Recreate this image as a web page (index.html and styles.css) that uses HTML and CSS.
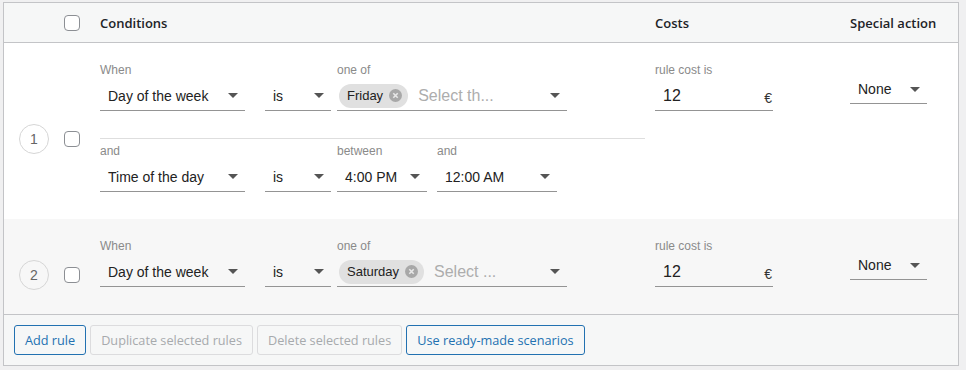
FILE: index.html
```html
<!DOCTYPE html>
<html lang="en">
<head>
  <meta charset="UTF-8">
  <title>Rules table</title>
  <link rel="stylesheet" href="styles.css">
</head>
<body>
  <div class="rules">
    <div class="row rules-head">
      <div class="cell"></div>
      <div class="cell check"><span class="checkbox"></span></div>
      <div class="cell">Conditions</div>
      <div class="cell">Costs</div>
      <div class="cell">Special action</div>
    </div>

    <div class="row rule">
      <div class="cell num"><span class="circle">1</span></div>
      <div class="cell check"><span class="checkbox"></span></div>
      <div class="cell conditions">
        <div class="condition">
          <div class="field w-what">
            <div class="label">When</div>
            <div class="select"><span>Day of the week</span><i class="caret"></i></div>
          </div>
          <div class="field w-is">
            <div class="label">&nbsp;</div>
            <div class="select"><span>is</span><i class="caret"></i></div>
          </div>
          <div class="field w-multi">
            <div class="label">one of</div>
            <div class="select multi">
              <span class="chip">Friday
                <svg width="13" height="13" viewBox="0 0 13 13"><circle cx="6.5" cy="6.5" r="6.5" fill="#a8a8a8"/><path d="M4.3 4.3l4.4 4.4M8.7 4.3l-4.4 4.4" stroke="#e8e8e8" stroke-width="1.6"/></svg>
              </span>
              <span class="placeholder">Select th...</span>
              <i class="caret"></i>
            </div>
          </div>
        </div>
        <div class="divider"></div>
        <div class="condition">
          <div class="field w-what">
            <div class="label">and</div>
            <div class="select"><span>Time of the day</span><i class="caret"></i></div>
          </div>
          <div class="field w-is">
            <div class="label">&nbsp;</div>
            <div class="select"><span>is</span><i class="caret"></i></div>
          </div>
          <div class="field w-time">
            <div class="label">between</div>
            <div class="select"><span>4:00 PM</span><i class="caret"></i></div>
          </div>
          <div class="field w-time2">
            <div class="label">and</div>
            <div class="select"><span>12:00 AM</span><i class="caret"></i></div>
          </div>
        </div>
      </div>
      <div class="cell">
        <div class="field w-cost">
          <div class="label">rule cost is</div>
          <div class="select cost"><span>12</span><span class="euro">€</span></div>
        </div>
      </div>
      <div class="cell">
        <div class="select action"><span>None</span><i class="caret"></i></div>
      </div>
    </div>

    <div class="row rule rule-alt">
      <div class="cell num"><span class="circle">2</span></div>
      <div class="cell check"><span class="checkbox"></span></div>
      <div class="cell conditions">
        <div class="condition">
          <div class="field w-what">
            <div class="label">When</div>
            <div class="select"><span>Day of the week</span><i class="caret"></i></div>
          </div>
          <div class="field w-is">
            <div class="label">&nbsp;</div>
            <div class="select"><span>is</span><i class="caret"></i></div>
          </div>
          <div class="field w-multi">
            <div class="label">one of</div>
            <div class="select multi">
              <span class="chip">Saturday
                <svg width="13" height="13" viewBox="0 0 13 13"><circle cx="6.5" cy="6.5" r="6.5" fill="#a8a8a8"/><path d="M4.3 4.3l4.4 4.4M8.7 4.3l-4.4 4.4" stroke="#e8e8e8" stroke-width="1.6"/></svg>
              </span>
              <span class="placeholder">Select ...</span>
              <i class="caret"></i>
            </div>
          </div>
        </div>
      </div>
      <div class="cell">
        <div class="field w-cost">
          <div class="label">rule cost is</div>
          <div class="select cost"><span>12</span><span class="euro">€</span></div>
        </div>
      </div>
      <div class="cell">
        <div class="select action"><span>None</span><i class="caret"></i></div>
      </div>
    </div>

    <div class="rules-foot">
      <button class="btn">Add rule</button>
      <button class="btn disabled">Duplicate selected rules</button>
      <button class="btn disabled">Delete selected rules</button>
      <button class="btn">Use ready-made scenarios</button>
    </div>
  </div>
</body>
</html>
```

FILE: styles.css
```css
body {
  margin: 0;
  background: #f0f0f1;
  font-family: "Liberation Sans", Arial, sans-serif;
  color: #1d2327;
}
.rules {
  width: 956px;
  box-sizing: border-box;
  margin: 2px 0 0 3px;
  border: 1px solid #c3c4c7;
  background: #fff;
}
.row {
  display: grid;
  grid-template-columns: 46px 50px 555px 195px 1fr;
}
.rules-head {
  height: 39px;
  align-items: center;
  background: #f6f7f7;
  border-bottom: 1px solid #c3c4c7;
  font-family: "Open Sans", "Noto Sans", sans-serif;
  font-size: 13px;
  font-weight: 600;
}
.rules-head .cell { display: flex; align-items: center; }
.rules-head .check { padding-left: 14px; }
.checkbox {
  display: block;
  width: 16px;
  height: 16px;
  box-sizing: border-box;
  border: 1px solid #8c8f94;
  border-radius: 4px;
  background: #fff;
}
.rule { background: #fff; }
.rule-alt { background: #f7f7f7; border-bottom: 1px solid #c3c4c7; }
.rule > .cell { padding: 20px 0 27px; }
.rule > .num, .rule > .check {
  display: flex;
  align-items: center;
  padding: 16px 0 0 14px;
}
.rule > .num { padding-left: 15px; }
.circle {
  width: 30px;
  height: 30px;
  box-sizing: border-box;
  border: 1px solid #d6d6d6;
  border-radius: 50%;
  display: flex;
  align-items: center;
  justify-content: center;
  font-size: 14px;
  color: #666;
}
.rule > .conditions { padding-right: 10px; }
.condition { display: flex; }
.divider {
  height: 1px;
  background: #dedede;
  margin: 27px 0 5px;
}
.label {
  height: 14px;
  line-height: 14px;
  font-size: 12px;
  color: #8a8a8a;
  margin-bottom: 4px;
}
.select {
  height: 29px;
  border-bottom: 1px solid #949494;
  display: flex;
  align-items: center;
  justify-content: space-between;
  padding: 0 7px 0 8px;
  font-size: 14px;
  color: #222;
}
.caret {
  width: 0;
  height: 0;
  border-left: 5px solid transparent;
  border-right: 5px solid transparent;
  border-top: 5px solid #555;
}
.w-what { width: 145px; margin-right: 20px; }
.w-is { width: 66px; margin-right: 6px; }
.w-multi { width: 230px; }
.w-time { width: 90px; margin-right: 10px; }
.w-time2 { width: 120px; }
.w-cost { width: 118px; }
.multi { padding-left: 2px; justify-content: flex-start; }
.multi .caret { margin-left: auto; }
.chip {
  display: flex;
  align-items: center;
  height: 24px;
  padding: 0 6px 0 8px;
  border-radius: 12px;
  background: #e0e0e0;
  font-size: 13px;
  color: #222;
}
.chip svg { margin-left: 6px; }
.placeholder {
  margin-left: 10px;
  font-size: 16px;
  color: #adadad;
}
.cost { font-size: 16px; padding-right: 1px; }
.euro { font-size: 14px; padding-top: 5px; color: #333; }
.action { width: 77px; box-sizing: border-box; margin-top: 12px; }
.rules-foot {
  display: flex;
  gap: 4px;
  padding: 10px;
  background: #f6f7f7;
}
.btn {
  height: 30px;
  padding: 0 10px;
  border: 1px solid #2271b1;
  border-radius: 3px;
  background: #f6f7f7;
  color: #2271b1;
  font-family: "Open Sans", "Noto Sans", sans-serif;
  font-size: 12.7px;
  cursor: pointer;
}
.btn.disabled {
  border-color: #dcdcde;
  color: #a7aaad;
  cursor: default;
}
```
